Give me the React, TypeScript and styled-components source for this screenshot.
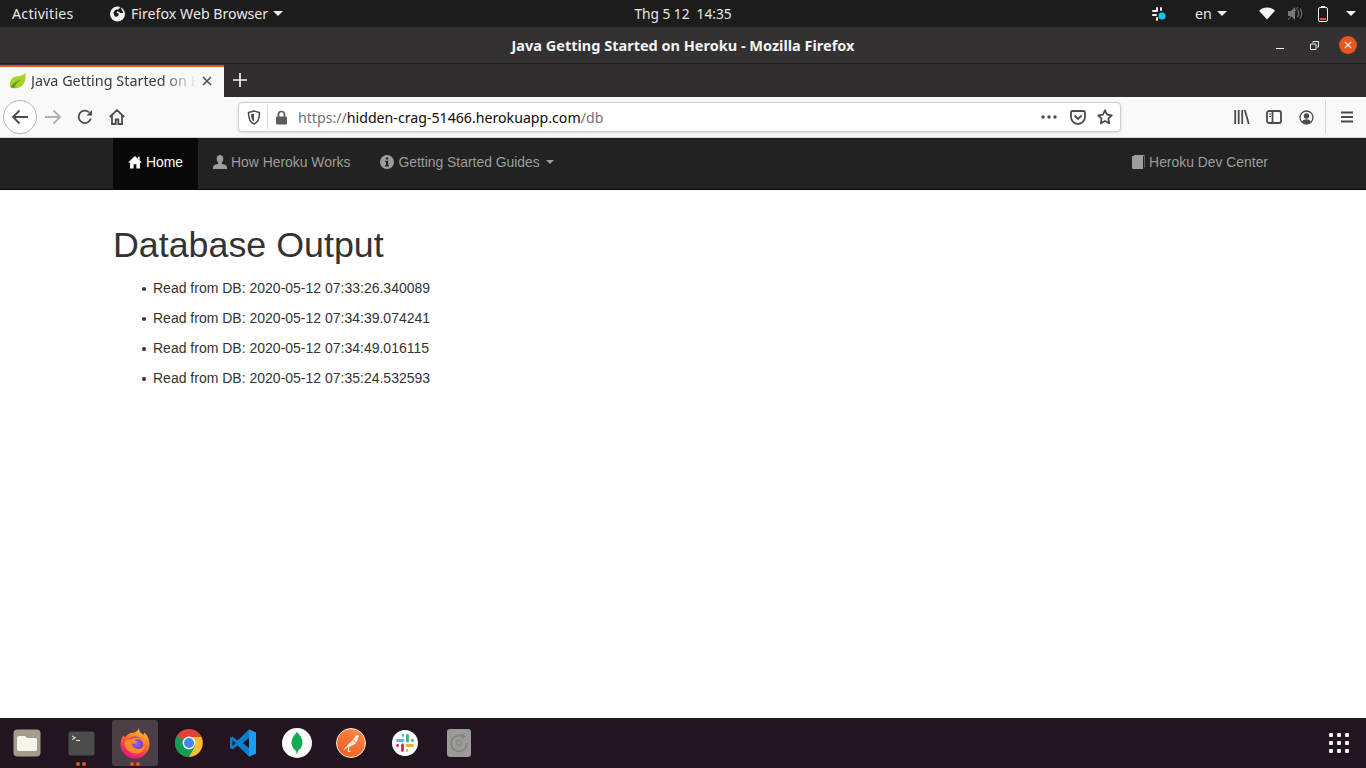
import React from "react";
import styled, { createGlobalStyle } from "styled-components";

const GlobalStyle = createGlobalStyle`
  html, body { margin: 0; padding: 0; height: 100%; background: #fff; overflow: hidden; }
  #root { height: 100%; }
  * { box-sizing: border-box; }
`;

const UI_FONT = `"Noto Sans", "Open Sans", sans-serif`;
const WEB_FONT = `"Liberation Sans", Arial, sans-serif`;

const Desktop = styled.div`
  width: 1366px;
  height: 768px;
  display: flex;
  flex-direction: column;
  overflow: hidden;
`;

/* gnome top bar */
const TopBar = styled.div`
  height: 27px;
  flex: none;
  background: #1c1c1c;
  color: #e8e8e8;
  font: 400 14.2px ${UI_FONT};
  display: grid;
  grid-template-columns: 1fr auto 1fr;
  align-items: center;
`;
const TopLeft = styled.div`
  display: flex;
  align-items: center;
  padding-left: 12px;
`;
const Activities = styled.span`
  width: 97px;
  letter-spacing: 0.25px;
`;
const AppMenu = styled.div`
  display: flex;
  align-items: center;
  gap: 5px;
`;
const Clock = styled.span`
  white-space: pre;
  font-size: 13.7px;
`;
const TopRight = styled.div`
  display: flex;
  align-items: center;
  justify-content: flex-end;
  padding-right: 10px;
`;
const Caret = styled.span<{ $size?: number; $color?: string; $gap?: number }>`
  display: inline-block;
  width: 0;
  height: 0;
  margin-left: ${(p) => p.$gap ?? 0}px;
  border-left: ${(p) => p.$size ?? 5}px solid transparent;
  border-right: ${(p) => p.$size ?? 5}px solid transparent;
  border-top: ${(p) => p.$size ?? 5}px solid ${(p) => p.$color ?? "#eee"};
`;
const Tray = styled.div<{ $w: number }>`
  width: ${(p) => p.$w}px;
  display: flex;
  align-items: center;
  justify-content: center;
  gap: 5px;
`;

/* window title */
const TitleBar = styled.div`
  height: 37px;
  flex: none;
  background: #333132;
  border-bottom: 1px solid #1f1e1f;
  color: #f4f4f4;
  font: 700 14.5px ${UI_FONT};
  display: grid;
  grid-template-columns: 1fr auto 1fr;
  align-items: center;
`;
const WindowControls = styled.div`
  grid-column: 3;
  display: flex;
  justify-content: flex-end;
  align-items: center;
  padding-right: 1px;
`;
const WindowButton = styled.span`
  width: 34px;
  display: flex;
  align-items: center;
  justify-content: center;
`;
const CloseDot = styled.span`
  width: 18px;
  height: 18px;
  border-radius: 50%;
  background: #e95420;
  display: flex;
  align-items: center;
  justify-content: center;
`;

/* tabs */
const TabStrip = styled.div`
  height: 33px;
  flex: none;
  background: #2f2d2e;
  display: flex;
  align-items: stretch;
`;
const Tab = styled.div`
  width: 224px;
  background: #f9f9fa;
  border-top: 2px solid #e95420;
  margin-top: 1px;
  display: flex;
  align-items: center;
  padding: 0 0 3px 9px;
  color: #38383d;
  font: 400 14.4px ${UI_FONT};
`;
const TabTitle = styled.span`
  margin-left: 5px;
  width: 166px;
  white-space: nowrap;
  overflow: hidden;
  -webkit-mask-image: linear-gradient(to right, #000 78%, transparent 100%);
  mask-image: linear-gradient(to right, #000 78%, transparent 100%);
`;
const TabClose = styled.span`
  margin-left: 5px;
  display: flex;
`;
const NewTab = styled.div`
  width: 32px;
  padding-bottom: 2px;
  display: flex;
  align-items: center;
  justify-content: center;
`;

/* firefox toolbar */
const Toolbar = styled.div`
  height: 41px;
  flex: none;
  background: #f9f9fa;
  border-bottom: 1px solid #d0d0d2;
  display: flex;
  align-items: center;
  padding-left: 3px;
`;
const BackButton = styled.div`
  width: 34px;
  height: 34px;
  border-radius: 50%;
  border: 1px solid #b5b5b8;
  background: #fff;
  display: flex;
  align-items: center;
  justify-content: center;
`;
const ToolButton = styled.div<{ $w?: number }>`
  width: ${(p) => p.$w ?? 32}px;
  height: 32px;
  flex: none;
  display: flex;
  align-items: center;
  justify-content: center;
`;
const UrlBar = styled.div`
  margin-left: 105px;
  margin-right: 105px;
  width: 883px;
  height: 30px;
  background: #fff;
  border: 1px solid #cfcfd2;
  border-radius: 4px;
  box-shadow: 0 1px 3px rgba(0, 0, 0, 0.12);
  display: flex;
  align-items: center;
  padding-left: 1px;
  padding-right: 1px;
`;
const UrlDivider = styled.span`
  width: 1px;
  height: 24px;
  background: #d7d7db;
`;
const UrlText = styled.span`
  flex: 1;
  margin-left: 4px;
  color: #737373;
  font: 400 14.17px ${UI_FONT};
  white-space: nowrap;
`;
const UrlHost = styled.span`
  color: #0c0c0d;
`;
const ToolSeparator = styled.span`
  width: 1px;
  height: 34px;
  margin: 0 3px;
  background: #d7d7db;
  flex: none;
`;

/* the heroku page */
const Navbar = styled.nav`
  height: 52px;
  flex: none;
  background: #222;
  border-bottom: 1px solid #080808;
  padding: 0 83px 0 113px;
  display: flex;
  justify-content: space-between;
  font: 400 13.9px/20px ${WEB_FONT};
`;
const NavList = styled.div`
  display: flex;
`;
const NavLink = styled.a<{ $active?: boolean }>`
  height: 51px;
  padding: 0 15px 4px;
  display: flex;
  align-items: center;
  gap: 4px;
  color: ${(p) => (p.$active ? "#fff" : "#9d9d9d")};
  background: ${(p) => (p.$active ? "#080808" : "transparent")};
`;
const Content = styled.main`
  flex: 1;
  background: #fff;
  padding: 16px 113px 0;
  color: #333;
  font: 400 14px/20px ${WEB_FONT};
`;
const Heading = styled.h1`
  margin: 20px 0 12px;
  font: 500 35.8px/39.6px ${WEB_FONT};
`;
const OutputList = styled.ul`
  margin: 0 0 10px;
  padding-left: 40px;
  list-style: none;
`;
const OutputItem = styled.li`
  margin-bottom: 10px;

  &::before {
    content: "";
    display: inline-block;
    width: 4px;
    height: 4px;
    margin: 0 7px 2px -11px;
    border-radius: 50%;
    background: #333;
  }
`;

/* dock */
const Dock = styled.div`
  height: 50px;
  flex: none;
  background: #231520;
  display: flex;
  align-items: center;
  justify-content: space-between;
  padding-right: 17px;
`;
const DockApps = styled.div`
  display: flex;
`;
const DockItem = styled.div<{ $active?: boolean }>`
  position: relative;
  width: 46px;
  height: 46px;
  margin: 0 4px;
  border-radius: 3px;
  display: flex;
  align-items: center;
  justify-content: center;
  background: ${(p) => (p.$active ? "#4b3f47" : "transparent")};
`;
const RunDots = styled.span`
  position: absolute;
  left: 50%;
  bottom: 0;
  transform: translateX(-50%);
  display: flex;
  gap: 2px;
`;
const RunDot = styled.span`
  width: 4px;
  height: 4px;
  border-radius: 50%;
  background: #e95420;
`;
const AppGrid = styled.div`
  display: grid;
  grid-template-columns: repeat(3, 4px);
  gap: 4px;
`;
const AppGridDot = styled.span`
  width: 4px;
  height: 4px;
  border-radius: 1px;
  background: #f2f2f2;
`;

const GnomeFirefox = () => (
  <svg width="17" height="17" viewBox="0 0 17 17">
    <circle cx="8.5" cy="9" r="7.5" fill="#f2f2f2" />
    <path d="M4.5 7.5c1-2.6 3.4-3.6 5.4-3.3L11.5 1l1 3.6c1 1 1.6 2.2 1.6 3.4H11c-.4-1.2-1.4-1.7-2.6-1.6l-1 1.4 2.2.8c.5 2-1 3.4-2.6 3.2C5.7 11.6 4.7 10 4.5 7.5z" fill="#1c1c1c" />
  </svg>
);
const TraySlack = () => (
  <svg width="16" height="16" viewBox="0 0 16 16">
    <g fill="#eee">
      <rect x="5" y="1" width="2" height="5" rx="1" />
      <rect x="9" y="1" width="2" height="4" rx="1" />
      <rect x="1" y="4" width="5" height="2" rx="1" />
      <rect x="1" y="8" width="5" height="2" rx="1" />
      <rect x="5" y="11" width="2" height="4" rx="1" />
    </g>
    <circle cx="11" cy="10" r="3.6" fill="#19c3f0" />
  </svg>
);
const TrayWifi = () => (
  <svg width="16" height="13" viewBox="0 0 17 13">
    <path d="M8.5 13 0 3.500C2.200 1.300 5.200 0 8.500 0S14.800 1.300 17 3.500z" fill="#f2f2f2" />
  </svg>
);
const TraySound = () => (
  <svg width="16" height="15" viewBox="0 0 16 15" fill="none">
    <path d="M1 5h3l4-4v13l-4-4H1z" fill="#777" />
    <path d="M10.500 4c1.300 2 1.300 5 0 7M13 2.500c2 3 2 7 0 10" stroke="#777" strokeWidth="1.100" />
    <path d="M1 14 11 1" stroke="#777" strokeWidth="1" />
  </svg>
);
const TrayBattery = () => (
  <svg width="10" height="16" viewBox="0 0 10 16" fill="none">
    <rect x="3" y="0" width="4" height="2" fill="#eee" />
    <rect x=".5" y="1.500" width="9" height="14" rx="1.500" stroke="#eee" />
    <rect x="2" y="12" width="6" height="2" fill="#e95420" />
  </svg>
);
const Leaf = () => (
  <svg width="17" height="16" viewBox="0 0 17 16">
    <path d="M1 11C1 5 5 3.500 10 3c3-.5 5-1.500 6.500-3 .5 6-.5 13-7.500 15-3 .7-6.500.3-8-1.500z" fill="#a4d426" />
    <path d="M1.500 14c2.500-4 6.500-6.500 11-7.500-3.500 2-6 4.500-7 8.500-1.500.3-3 0-4-1z" fill="#5f9e22" />
  </svg>
);
const SmallX = ({ color, size }: { color: string; size: number }) => (
  <svg width={size} height={size} viewBox="0 0 10 10">
    <path d="M1 1l8 8M9 1 1 9" stroke={color} strokeWidth="1.500" />
  </svg>
);

const stroke = { fill: "none", stroke: "#4a4a4f", strokeWidth: 1.8 };
const Back = () => (
  <svg width="18" height="16" viewBox="0 0 18 16">
    <path d="M17 8H2M8.500 1.500 2 8l6.500 6.500" {...stroke} />
  </svg>
);
const Forward = () => (
  <svg width="18" height="16" viewBox="0 0 18 16">
    <path d="M1 8h15M9.500 1.500 16 8l-6.500 6.500" {...stroke} stroke="#b1b1b3" />
  </svg>
);
const Reload = () => (
  <svg width="16" height="16" viewBox="0 0 16 16">
    <path d="M13.800 9.500A6.200 6.200 0 1 1 12 3.300" {...stroke} />
    <path d="M15 1v5.500H9.500z" fill="#4a4a4f" />
  </svg>
);
const HomeOutline = () => (
  <svg width="16" height="16" viewBox="0 0 16 16">
    <path d="M.8 8 8 1.200 15.200 8M3 6.500V15h3.700v-4.500h2.600V15H13V6.500" {...stroke} />
  </svg>
);
const Shield = () => (
  <svg width="14" height="15" viewBox="0 0 14 15">
    <path d="M7 1 1.500 2.500C1.500 9 3 12.500 7 14c4-1.500 5.500-5 5.500-11.500z" {...stroke} strokeWidth="1.500" />
    <path d="M7 3.500 4 4.300C4 8 5 10.500 7 11.500z" fill="#4a4a4f" />
  </svg>
);
const Lock = () => (
  <svg width="13" height="15" viewBox="0 0 13 15">
    <path d="M3.500 7V4.500a3 3 0 0 1 6 0V7" fill="none" stroke="#5b5b60" strokeWidth="1.700" />
    <rect x="1" y="6.500" width="11" height="8" rx="1.200" fill="#5b5b60" />
  </svg>
);
const Dots = () => (
  <svg width="16" height="4" viewBox="0 0 16 4" fill="#4a4a4f">
    <circle cx="2" cy="2" r="1.700" />
    <circle cx="8" cy="2" r="1.700" />
    <circle cx="14" cy="2" r="1.700" />
  </svg>
);
const Pocket = () => (
  <svg width="16" height="15" viewBox="0 0 16 15">
    <path d="M1 2.500C1 1.500 1.500 1 2.500 1h11c1 0 1.500.5 1.500 1.500V7A7 7 0 0 1 1 7z" {...stroke} />
    <path d="M4.500 5.500 8 9l3.500-3.500" {...stroke} />
  </svg>
);
const Star = () => (
  <svg width="16" height="16" viewBox="0 0 16 16">
    <path d="m8 1.300 2.100 4.300 4.700.7-3.400 3.300.8 4.700L8 12l-4.200 2.300.8-4.700L1.200 6.300l4.700-.7z" {...stroke} strokeLinejoin="round" />
  </svg>
);
const Library = () => (
  <svg width="16" height="14" viewBox="0 0 16 14">
    <path d="M1.200 0v14M4.700 0v14M8.200 0v14M10.800 0l4 14" {...stroke} />
  </svg>
);
const Sidebar = () => (
  <svg width="16" height="14" viewBox="0 0 16 14">
    <rect x="1" y="1" width="14" height="12" rx="2" {...stroke} />
    <path d="M6.500 1v12" {...stroke} />
    <path d="M3 4h2M3 6.500h2" {...stroke} strokeWidth="1.200" />
  </svg>
);
const Profile = () => (
  <svg width="15" height="15" viewBox="0 0 15 15">
    <circle cx="7.500" cy="7.500" r="6.500" {...stroke} strokeWidth="1.300" />
    <circle cx="7.500" cy="6" r="2.700" fill="#4a4a4f" />
    <path d="M2.800 12c1-2 3-2.700 4.700-2.700s3.700.7 4.700 2.700a6.500 6.500 0 0 1-9.400 0z" fill="#4a4a4f" />
  </svg>
);
const Hamburger = () => (
  <svg width="14" height="12" viewBox="0 0 14 12">
    <path d="M1 1.500h12M1 6h12M1 10.500h12" {...stroke} />
  </svg>
);

const Glyph = styled.svg`
  flex: none;
  fill: currentColor;
`;
const HomeGlyph = () => (
  <Glyph width="14" height="14" viewBox="0 0 15 14">
    <path d="M7.500 .5 0 7.500h2.200V14H6V9.500h3V14h3.800V7.500H15l-2.500-2.300V1.500h-2v1.900z" />
  </Glyph>
);
const UserGlyph = () => (
  <Glyph width="14" height="14" viewBox="0 0 14 14">
    <path d="M7 0c2 0 3.300 1.500 3.300 3.700 0 1.500-.6 3-1.500 3.900v1.200c1.500.5 5.200 1.300 5.200 3.400V14H0v-1.800c0-2.100 3.700-2.900 5.200-3.400V7.600c-.9-.9-1.500-2.400-1.500-3.900C3.700 1.500 5 0 7 0z" />
  </Glyph>
);
const InfoGlyph = () => (
  <Glyph width="14" height="14" viewBox="0 0 14 14">
    <path fillRule="evenodd" d="M7 0a7 7 0 1 1 0 14A7 7 0 0 1 7 0zM5.800 2.500v2h2.400v-2zM5 5.700v1.300h1v3.300H5v1.300h4v-1.300H8.200V5.700z" />
  </Glyph>
);
const BookGlyph = () => (
  <Glyph width="13" height="14" viewBox="0 0 13 14">
    <path d="M2 0h10.500v12.500H12V1H2z" />
    <path d="M1 1h10v13H1.500C.7 14 0 13.300 0 12.500V2c0-.6.400-1 1-1z" />
  </Glyph>
);

const FilesApp = () => (
  <svg width="28" height="28" viewBox="0 0 28 28">
    <rect x=".5" y=".5" width="27" height="27" rx="4" fill="#a39d8c" />
    <path d="M4 9c0-1 .7-2 2-2h6l2 2h8c1.300 0 2 .8 2 2v9c0 1.500-.8 2-2 2H6c-1.300 0-2-.7-2-2z" fill="#f7f4ee" />
  </svg>
);
const TerminalApp = () => (
  <svg width="27" height="25" viewBox="0 0 27 25">
    <rect x=".5" y=".5" width="26" height="24" rx="2.500" fill="#4c4c4a" />
    <path d="m4 5 3.500 1.800L4 8.500" fill="none" stroke="#eee" strokeWidth="1" />
    <path d="M8 9.500h4" stroke="#eee" strokeWidth="1" />
  </svg>
);
const FirefoxApp = () => (
  <svg width="30" height="31" viewBox="0 0 30 31">
    <defs>
      <linearGradient id="ffBody" x1="0.8" y1="0.05" x2="0.35" y2="1">
        <stop offset="0" stopColor="#ffc629" />
        <stop offset=".45" stopColor="#ff6b2b" />
        <stop offset=".85" stopColor="#f0246a" />
        <stop offset="1" stopColor="#e01b8c" />
      </linearGradient>
      <radialGradient id="ffCore" cx=".55" cy=".45" r=".65">
        <stop offset="0" stopColor="#9a63ee" />
        <stop offset="1" stopColor="#5b2bbd" />
      </radialGradient>
    </defs>
    <path d="M19 0c-.3 3 1.500 4.800 4 6.800 1-.6 1.300-1.300 1.500-2.300C27.500 7.500 29.500 11.500 29.500 16a14.500 14.500 0 0 1-29 0C.5 13 1.500 9.500 3.500 7.500c.4.800.8 1.300 1.500 1.800 2-3 5-4.300 8-4.500 2-.1 5-1.800 6-4.800z" fill="url(#ffBody)" />
    <circle cx="15.500" cy="16" r="7.500" fill="url(#ffCore)" />
    <path d="M10.500 11.500c1.800-1.500 4-2.200 6.500-2 3 .3 5.500 2 6.500 4.800-1.200-1.800-3-2.800-5.500-3-1.500 0-2.800.5-3.500 1.200 1 .3 2 .7 2.700 1.500-1.500 1.700-3.800 2-5.500 1.300.4 3 3 5.700 6.500 5.700 3.500 0 6.300-2.500 7-5.500.5 5.500-3.500 10-8.500 10C9.500 25.500 5 21 4.500 15c1.500-2.500 3.500-3.500 6-3.500z" fill="#ff8a2a" />
  </svg>
);
const ChromeApp = () => (
  <svg width="28" height="28" viewBox="0 0 28 28">
    <circle cx="14" cy="14" r="14" fill="#db4437" />
    <path d="M14 14 1.900 7A14 14 0 0 0 14 28l7-12z" fill="#0f9d58" />
    <path d="M14 8h12.200A14 14 0 0 1 14 28l6.100-11z" fill="#fbc02d" />
    <circle cx="14" cy="14" r="6.400" fill="#fff" />
    <circle cx="14" cy="14" r="5" fill="#4285f4" />
  </svg>
);
const VSCodeApp = () => (
  <svg width="28" height="28" viewBox="0 0 28 28">
    <path fillRule="evenodd" d="M20 .5 27 3.500v21L20 27.500 8.500 16.500 3.500 20.500 1 19V9l2.500-1.500 5 4zM20 9l-6.200 5L20 19zM3.500 11v6l3.300-3z" fill="#0a7fcb" />
    <path fillRule="evenodd" d="M20 .5 27 3.500v21l-7 3V19 9z" fill="#1f9cf0" />
  </svg>
);
const MongoApp = () => (
  <svg width="30" height="30" viewBox="0 0 30 30">
    <circle cx="15" cy="15" r="15" fill="#fff" />
    <path d="M15 4c3.500 3.500 5.500 7 5.500 10.500 0 4-2.500 7-4.700 8.500l-.5 3h-.7l-.5-3c-2.200-1.500-4.600-4.500-4.600-8.500C9.500 11 11.500 7.500 15 4z" fill="#13aa52" />
  </svg>
);
const PostmanApp = () => (
  <svg width="30" height="30" viewBox="0 0 30 30">
    <defs>
      <linearGradient id="pmBody" x1="0.8" y1="0" x2="0.2" y2="1">
        <stop offset="0" stopColor="#ff8b45" />
        <stop offset="1" stopColor="#ef5a24" />
      </linearGradient>
    </defs>
    <circle cx="15" cy="15" r="14.500" fill="url(#pmBody)" stroke="#f8e6dc" strokeWidth="1" />
    <path d="M7.500 21.500 16.500 12l3.500 3.500-6.500 3.500-1.500-.5-3.500 3.500z" fill="#fde9dd" />
    <path d="M17 11.500l2.500-3 2.800 2.800-2.300 3.500z" fill="#fde9dd" />
    <circle cx="21" cy="8.500" r="1.800" fill="#fde9dd" />
    <path d="M12.500 19v4.500h2" fill="none" stroke="#fde9dd" strokeWidth="1.200" />
  </svg>
);
const SlackApp = () => (
  <svg width="26" height="26" viewBox="0 0 26 26">
    <circle cx="13" cy="13" r="13" fill="#fff" />
    <g strokeWidth="2.800" strokeLinecap="round" fill="none">
      <path d="M5.500 10.500h5.500M11 5.500v.1" stroke="#36c5f0" />
      <path d="M15.500 5.500v5.500M20.500 10.500h.1" stroke="#2eb67d" />
      <path d="M20.500 15.500H15M15 20.500v.1" stroke="#ecb22e" />
      <path d="M10.500 20.500V15M5.500 15.500h.1" stroke="#e01e5a" />
    </g>
  </svg>
);
const DiskApp = () => (
  <svg width="24" height="28" viewBox="0 0 24 28" fill="none">
    <rect width="24" height="28" rx="3" fill="#9b9b99" />
    <path d="M16 7.500A8 8 0 1 0 20 14" stroke="#7f7f7d" strokeWidth="1.500" />
    <path d="m14.500 5 3 2.500-3 2" stroke="#7f7f7d" strokeWidth="1.200" />
    <circle cx="12" cy="14" r="2.500" stroke="#7f7f7d" />
  </svg>
);

const navLeft = [
  { label: "Home", icon: <HomeGlyph />, active: true },
  { label: "How Heroku Works", icon: <UserGlyph /> },
  { label: "Getting Started Guides", icon: <InfoGlyph />, caret: true },
];

const rows = [
  "2020-05-12 07:33:26.340089",
  "2020-05-12 07:34:39.074241",
  "2020-05-12 07:34:49.016115",
  "2020-05-12 07:35:24.532593",
];

const dockApps = [
  { el: <FilesApp /> },
  { el: <TerminalApp />, running: true },
  { el: <FirefoxApp />, running: true, active: true },
  { el: <ChromeApp /> },
  { el: <VSCodeApp /> },
  { el: <MongoApp /> },
  { el: <PostmanApp /> },
  { el: <SlackApp /> },
  { el: <DiskApp /> },
];

export default function App() {
  return (
    <Desktop>
      <GlobalStyle />
      <TopBar>
        <TopLeft>
          <Activities>Activities</Activities>
          <AppMenu>
            <GnomeFirefox />
            <span>Firefox Web Browser</span>
            <Caret />
          </AppMenu>
        </TopLeft>
        <Clock>Thg 5 12  14:35</Clock>
        <TopRight>
          <Tray $w={20}><TraySlack /></Tray>
          <Tray $w={84}>en <Caret /></Tray>
          <Tray $w={28}><TrayWifi /></Tray>
          <Tray $w={28}><TraySound /></Tray>
          <Tray $w={28}><TrayBattery /></Tray>
          <Caret $gap={9} />
        </TopRight>
      </TopBar>

      <TitleBar>
        <span />
        <span>Java Getting Started on Heroku - Mozilla Firefox</span>
        <WindowControls>
          <WindowButton>
            <svg width="8" height="8" viewBox="0 0 8 8"><path d="M0 7.500h8" stroke="#eee" /></svg>
          </WindowButton>
          <WindowButton>
            <svg width="9" height="9" viewBox="0 0 9 9" fill="none"><path d="M.5 3h5.500v5.500H.5zM3 2V.5h5.500V6H7" stroke="#eee" /></svg>
          </WindowButton>
          <WindowButton>
            <CloseDot><SmallX color="#fff" size={8} /></CloseDot>
          </WindowButton>
        </WindowControls>
      </TitleBar>

      <TabStrip>
        <Tab>
          <Leaf />
          <TabTitle>Java Getting Started on Heroku</TabTitle>
          <TabClose><SmallX color="#4a4a4f" size={10} /></TabClose>
        </Tab>
        <NewTab>
          <svg width="14" height="14" viewBox="0 0 14 14"><path d="M7 0v14M0 7h14" stroke="#f2f2f2" strokeWidth="1.700" /></svg>
        </NewTab>
      </TabStrip>

      <Toolbar>
        <BackButton><Back /></BackButton>
        <ToolButton><Forward /></ToolButton>
        <ToolButton><Reload /></ToolButton>
        <ToolButton><HomeOutline /></ToolButton>
        <UrlBar>
          <ToolButton $w={27}><Shield /></ToolButton>
          <UrlDivider />
          <ToolButton $w={26}><Lock /></ToolButton>
          <UrlText>https://<UrlHost>hidden-crag-51466.herokuapp.com</UrlHost>/db</UrlText>
          <ToolButton $w={30}><Dots /></ToolButton>
          <ToolButton $w={27}><Pocket /></ToolButton>
          <ToolButton $w={28}><Star /></ToolButton>
        </UrlBar>
        <ToolButton><Library /></ToolButton>
        <ToolButton><Sidebar /></ToolButton>
        <ToolButton><Profile /></ToolButton>
        <ToolSeparator />
        <ToolButton $w={36}><Hamburger /></ToolButton>
      </Toolbar>

      <Navbar>
        <NavList>
          {navLeft.map((n) => (
            <NavLink key={n.label} $active={n.active}>
              {n.icon}
              {n.label}
              {n.caret && <Caret $size={4} $color="#9d9d9d" $gap={2} />}
            </NavLink>
          ))}
        </NavList>
        <NavList>
          <NavLink><BookGlyph />Heroku Dev Center</NavLink>
        </NavList>
      </Navbar>

      <Content>
        <Heading>Database Output</Heading>
        <OutputList>
          {rows.map((r) => (
            <OutputItem key={r}>Read from DB: {r}</OutputItem>
          ))}
        </OutputList>
      </Content>

      <Dock>
        <DockApps>
          {dockApps.map((a, i) => (
            <DockItem key={i} $active={a.active}>
              {a.el}
              {a.running && (
                <RunDots><RunDot /><RunDot /></RunDots>
              )}
            </DockItem>
          ))}
        </DockApps>
        <AppGrid>
          {Array.from({ length: 9 }).map((_, i) => (
            <AppGridDot key={i} />
          ))}
        </AppGrid>
      </Dock>
    </Desktop>
  );
}
